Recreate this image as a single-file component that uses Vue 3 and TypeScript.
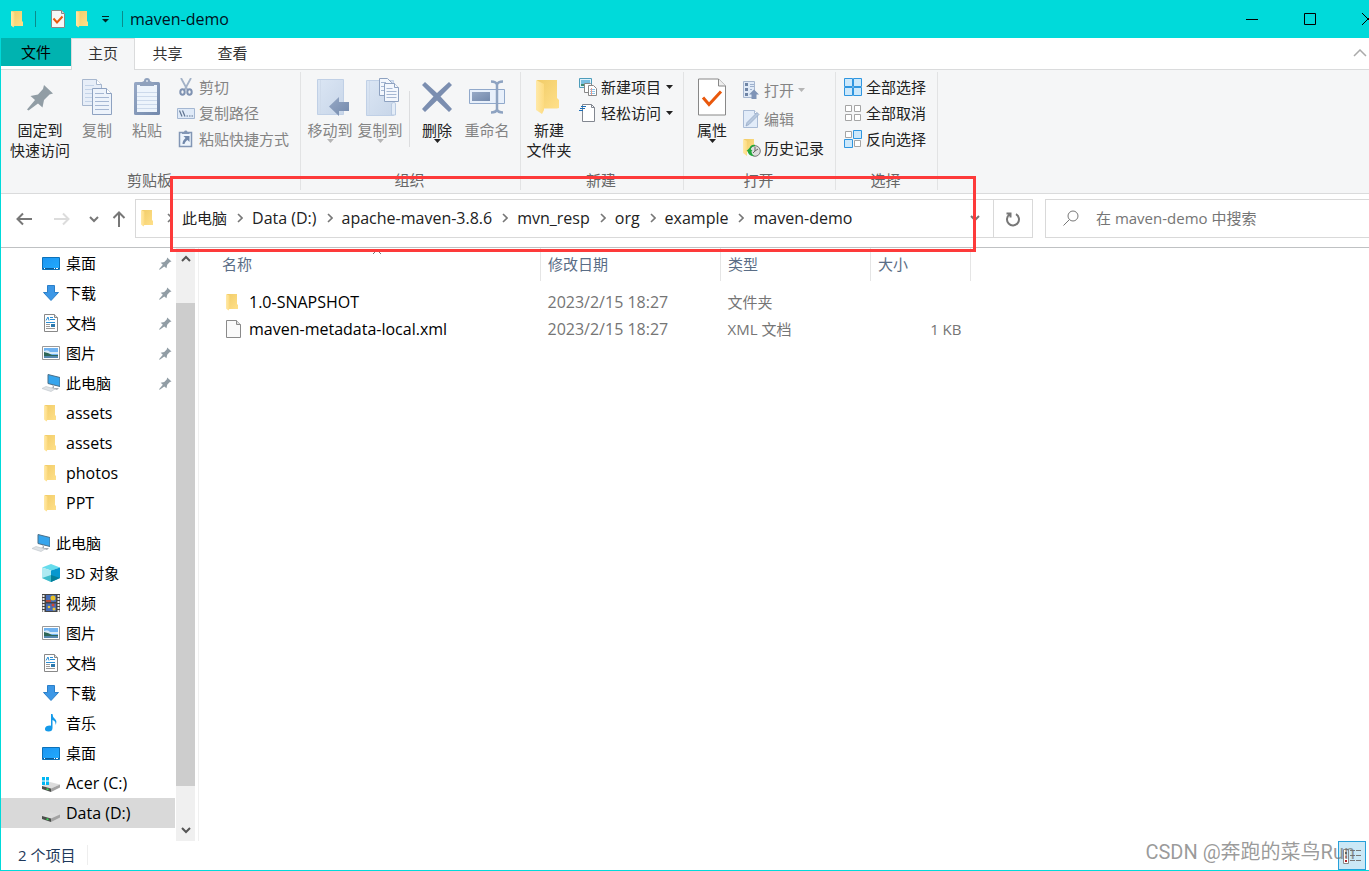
<script setup lang="ts">
import { ref } from 'vue'

interface TreeItem {
  label: string
  icon: string
  pinned?: boolean
  root?: boolean
  latin?: boolean
  selected?: boolean
}

interface FileRow {
  name: string
  icon: string
  modified: string
  type: string
  size: string
}

const tree: TreeItem[] = [
  { label: '桌面', icon: 'desktop', pinned: true },
  { label: '下载', icon: 'download', pinned: true },
  { label: '文档', icon: 'document', pinned: true },
  { label: '图片', icon: 'picture', pinned: true },
  { label: '此电脑', icon: 'computer', pinned: true },
  { label: 'assets', icon: 'folder', latin: true },
  { label: 'assets', icon: 'folder', latin: true },
  { label: 'photos', icon: 'folder', latin: true },
  { label: 'PPT', icon: 'folder', latin: true },
  { label: '此电脑', icon: 'computer', root: true },
  { label: '3D 对象', icon: 'cube' },
  { label: '视频', icon: 'video' },
  { label: '图片', icon: 'picture' },
  { label: '文档', icon: 'document' },
  { label: '下载', icon: 'download' },
  { label: '音乐', icon: 'music' },
  { label: '桌面', icon: 'desktop' },
  { label: 'Acer (C:)', icon: 'windrive', latin: true },
  { label: 'Data (D:)', icon: 'drive', latin: true, selected: true },
]

const crumbs: string[] = ['此电脑', 'Data (D:)', 'apache-maven-3.8.6', 'mvn_resp', 'org', 'example', 'maven-demo']

const files: FileRow[] = [
  { name: '1.0-SNAPSHOT', icon: 'folder', modified: '2023/2/15 18:27', type: '文件夹', size: '' },
  { name: 'maven-metadata-local.xml', icon: 'file', modified: '2023/2/15 18:27', type: 'XML 文档', size: '1 KB' },
]

const query = ref('')
</script>

<template>
  <div class="window">
    <svg class="sprite" aria-hidden="true">
      <defs>
        <linearGradient id="g-folder" x1="0" x2="1" y1="0" y2="1">
          <stop offset="0" stop-color="#f1cc68" /><stop offset="1" stop-color="#ffe08a" />
        </linearGradient>
        <linearGradient id="g-flap" x1="0" x2="1" y1="0" y2="0">
          <stop offset="0" stop-color="#ffe9a8" /><stop offset="1" stop-color="#fddb80" />
        </linearGradient>
        <linearGradient id="g-pale" x1="0" x2="1" y1="0" y2="1">
          <stop offset="0" stop-color="#dbe6f4" /><stop offset="1" stop-color="#c8d6e9" />
        </linearGradient>
        <linearGradient id="g-steel" x1="0" x2="1" y1="0" y2="1">
          <stop offset="0" stop-color="#97a9c6" /><stop offset="1" stop-color="#7389ac" />
        </linearGradient>
        <linearGradient id="g-blue" x1="0" x2="1" y1="0" y2="1">
          <stop offset="0" stop-color="#1b95f2" /><stop offset="1" stop-color="#22acff" />
        </linearGradient>
      </defs>
      <symbol id="i-folder" viewBox="0 0 18 18">
        <path d="M3 1h10v10l1 1v4H3z" fill="url(#g-folder)" />
        <path d="M2 1l3.500 1.600V15.500L4.500 17.500 2 15.500z" fill="url(#g-flap)" />
      </symbol>
      <symbol id="i-bigfolder" viewBox="0 0 26 36">
        <path d="M1 1h20v18l2 2v8h-2l2 .500H6z" fill="url(#g-folder)" />
        <path d="M0 1l8 4v26l-2 4-6-4z" fill="url(#g-flap)" />
      </symbol>
      <symbol id="i-pin" viewBox="0 0 27 27">
        <path d="M17 1l9 8.500-3.500 1L17 16l-1.500 7.500-4.500-4L1.500 26.500 0 25.500 8 16 3.500 12 11 10.500 16 5z" fill="#919da5" />
      </symbol>
      <symbol id="i-copy" viewBox="0 0 32 38">
        <g stroke="#a7b7ce">
          <path d="M1.500 1.500h14l5 5v21h-19z" fill="#e7eef8" /><path d="M15.500 1.500v5h5" fill="#fff" />
          <path d="M4 7.500h9M4 11.500h14M4 15.500h14M4 19.500h14M4 23.500h14" stroke="#c3d3e8" />
          <path d="M11.500 10.500h14l5 5v21h-19z" fill="#edf3fb" stroke="#8ea2c1" /><path d="M25.500 10.500v5h5" fill="#fff" stroke="#8ea2c1" />
          <path d="M14 15.500h9M14 19.500h14M14 23.500h14M14 27.500h14M14 31.500h14" stroke="#a5b7d3" />
        </g>
      </symbol>
      <symbol id="i-paste" viewBox="0 0 28 38">
        <rect x="1" y="4" width="26" height="33" rx="1.500" fill="url(#g-steel)" />
        <path d="M4 7h20v27H4z" fill="#edf4fc" />
        <path d="M4 14.500h20M4 18.500h20M4 22.500h20M4 26.500h20M4 30.500h20" stroke="#ccd9eb" />
        <path d="M7 8V5l4-2a3 3 0 0 1 6 0l4 2v3z" fill="#8fa1bd" /><circle cx="14" cy="3" r="1" fill="#dce5f0" />
      </symbol>
      <symbol id="i-cut" viewBox="0 0 18 18">
        <path d="M4 0l6.500 12M14 0L7.500 12" stroke="#a3b2c7" stroke-width="1.800" fill="none" />
        <g fill="none" stroke="#7f92b2" stroke-width="2"><ellipse cx="5.500" cy="14" rx="2.200" ry="2.800" /><ellipse cx="12.500" cy="14" rx="2.200" ry="2.800" /></g>
      </symbol>
      <symbol id="i-path" viewBox="0 0 18 18">
        <path d="M.5 4.500h17v10H.5z" fill="#dfeaf8" stroke="#a4b7d2" />
        <path d="M2.500 6.500l2.500 6M5.500 6.500l2.500 6M9.500 12h1.500M12 12h1.500M14.500 12h1.500" stroke="#5f7491" stroke-width="1.200" />
      </symbol>
      <symbol id="i-shortcut" viewBox="0 0 18 18">
        <path d="M2.500 2.500h12v14h-12z" fill="#edf4fc" stroke="#8296b5" stroke-width="1.500" />
        <path d="M5 4V2h2a1.800 1.800 0 0 1 3.500 0h2v2z" fill="#8296b5" />
        <path d="M6.500 6h6v6l-2-2c-1.500 1-2.500 2-3 4h-2c0-2.500 1-4 3-6z" fill="#7188ab" />
      </symbol>
      <symbol id="i-move" viewBox="0 0 34 38">
        <path d="M1.500 1.500h26v35h-26z" fill="url(#g-pale)" stroke="#c0d0e6" /><path d="M4.500 2v34" stroke="#cfdbeb" />
        <path d="M13 28.500L23 19v5h10v9H23v5z" fill="url(#g-steel)" />
      </symbol>
      <symbol id="i-copyto" viewBox="0 0 34 38">
        <path d="M.5 2.500h27v35H.5z" fill="url(#g-pale)" stroke="#c0d0e6" /><path d="M3.500 3v34" stroke="#cfdbeb" /><path d="M25.500 37V26q3-4 4 0v11z" fill="#e3ecf7" stroke="#b9cae1" />
        <g fill="#f3f7fd" stroke="#8ea2c1"><path d="M13.500.5h8l4 4v13h-12z" /><path d="M18.500 5.500h10l4 4v14h-14z" /><path d="M28.500 5.500v4h4" /><path d="M15 4.500h5M15 8.500h3M15 12.500h3M20.500 10.500h6M20.500 13.500h10M20.500 16.500h10M20.500 19.500h10" stroke="#a5b7d3" /></g>
      </symbol>
      <symbol id="i-delete" viewBox="0 0 32 32">
        <path d="M1 4l3-3 12 11L28 1l3 3-11.500 11.500L31 28l-3 3-12-11.500L4 31l-3-3 11.500-12.500z" fill="#7b8eb0" />
      </symbol>
      <symbol id="i-rename" viewBox="0 0 36 34">
        <path d="M.5 9.500h35v14H.5z" fill="#e8f0fb" stroke="#91a9cb" /><path d="M3 12h18v9H3z" fill="url(#g-steel)" />
        <path d="M22 1.500q5 0 6 3 1-3 6-3M28 4v26M22 32.500q5 0 6-3 1 3 6 3" fill="none" stroke="#8ea3c1" stroke-width="2.500" />
      </symbol>
      <symbol id="i-newitem" viewBox="0 0 18 18">
        <path d="M.5.5h12v9H.5z" fill="#dff1fb" stroke="#4e9dbb" /><path d="M2 2h9v4H2z" fill="#79bfe2" /><path d="M2 6h4v2H2z" fill="#3f8d72" />
        <path d="M5.500 5.500h6l2 2v7h-8z" fill="#fff" stroke="#888" />
        <path d="M9.500 7.500h5l3 3v7h-8z" fill="#fff" stroke="#888" /><path d="M11 11.500h5M11 13.500h5M11 15.500h5" stroke="#8fc5e7" /><path d="M12.500 10v7" stroke="#e79d91" />
      </symbol>
      <symbol id="i-easy" viewBox="0 0 18 18">
        <path d="M3.500.5h9l3 3v14h-12z" fill="#fff" stroke="#828790" /><path d="M12.500.5v3h3" fill="none" stroke="#828790" />
        <path d="M2 2.500h5M1 4.500h5M0 6.500h4" stroke="#1c6fb8" />
      </symbol>
      <symbol id="i-props" viewBox="0 0 28 37">
        <path d="M.5.500h20l7 7v29H.5z" fill="#fff" stroke="#888" /><path d="M20.500.5v7h7" fill="#eee" stroke="#888" />
        <path d="M5 19l6 7 12-13" fill="none" stroke="#e9580c" stroke-width="3" />
      </symbol>
      <symbol id="i-check" viewBox="0 0 14 18">
        <path d="M.5.500h10l3 3v14H.5z" fill="#f7f7f7" stroke="#888" /><path d="M10.500.5v3h3" fill="#ddd" stroke="#888" />
        <path d="M2.500 8.500l3.500 4 5.500-6" fill="none" stroke="#e9580c" stroke-width="2" />
      </symbol>
      <symbol id="i-open" viewBox="0 0 18 18">
        <path d="M.5.500h11v16H.5z" fill="#e0eaf7" stroke="#a6b6cf" /><path d="M2 2h3v3H2zM2 7h3v3H2zM2 12h3v3H2z" fill="#6f85a6" /><path d="M7 3.500h4M7 5.500h4M7 8.500h2" stroke="#9db0cd" />
        <path d="M11 8.500l5 5h-2.500V18h-5v-4.500H6z" fill="#7f94b7" />
      </symbol>
      <symbol id="i-edit" viewBox="0 0 18 18">
        <path d="M.5.5h11l3 3v14H.5z" fill="#e2ecf9" stroke="#a9bbd5" /><path d="M11.500.5v3h3" fill="#fff" stroke="#a9bbd5" />
        <path d="M3 16l1-3.500L14 2.500l2 2L6 14.500z" fill="#b7c8de" stroke="#91a5c3" stroke-width=".7" />
      </symbol>
      <symbol id="i-history" viewBox="0 0 18 18">
        <path d="M1 0h10v13H1z" fill="url(#g-folder)" /><path d="M0 0l4 2v15l-4-3z" fill="url(#g-flap)" />
        <circle cx="12" cy="12" r="5.300" fill="#ddd" stroke="#777" /><path d="M12 8v4l3-2M12 12l-2 2" stroke="#666" fill="none" />
        <path d="M3.500 12l3-3 3 3h-1q0 3.500 3 5-6 .5-7-5z" fill="#22a63b" /><path d="M7 10q1-4 5-3.500" stroke="#22a63b" stroke-width="1.500" fill="none" />
      </symbol>
      <symbol id="i-all" viewBox="0 0 18 18">
        <g fill="#cce8fb" stroke="#2f96e0"><path d="M.5.500h8v8h-8zM9.500.5h8v8h-8zM.5 9.500h8v8h-8zM9.500 9.500h8v8h-8z" /></g>
      </symbol>
      <symbol id="i-none" viewBox="0 0 18 18">
        <g fill="#fff" stroke="#a5a5a5"><path d="M1.500 1.500h6v6h-6zM10.500 1.500h6v6h-6zM1.500 10.500h6v6h-6zM10.500 10.500h6v6h-6z" /></g>
      </symbol>
      <symbol id="i-invert" viewBox="0 0 18 18">
        <g fill="#fff" stroke="#a5a5a5"><path d="M1.500 1.500h6v6h-6zM10.500 10.500h6v6h-6z" /></g>
        <g fill="#cce8fb" stroke="#2f96e0"><path d="M9.500.5h8v8h-8zM.5 9.500h8v8h-8z" /></g>
      </symbol>
      <symbol id="i-desktop" viewBox="0 0 18 18">
        <path d="M.5 3.500h17v12H.5z" fill="url(#g-blue)" stroke="#0c71b8" /><path d="M1 14h16v1H1z" fill="#0a5c99" /><path d="M2 14.500h1M12 14.500h1M14 14.500h2" stroke="#fff" />
      </symbol>
      <symbol id="i-download" viewBox="0 0 18 18">
        <path d="M5.500 1.500h7v7h4L9 16.500 1.500 8.500h4z" fill="#3c97e6" stroke="#2b7fc9" />
      </symbol>
      <symbol id="i-document" viewBox="0 0 18 18">
        <path d="M2.500.5h10l3 3v14h-13z" fill="#fff" stroke="#888" /><path d="M12.500.5v3h3" fill="#ddd" stroke="#888" />
        <path d="M4 6.500l2-3.500 1 3.500M8 3.500h3M8 5.500h5M4 8.500h9" stroke="#2a8fd6" fill="none" /><path d="M4 10.500h4M4 12.500h4M4 14.500h9" stroke="#999" /><path d="M9 10h4v3H9z" fill="#2b78ad" />
      </symbol>
      <symbol id="i-picture" viewBox="0 0 18 18">
        <path d="M.5 2.500h17v13H.5z" fill="#fff" stroke="#999" /><path d="M2 4h14v10H2z" fill="#6fb2f0" /><path d="M2 7q4-2 6 1h8v2H2z" fill="#d5e9f7" /><path d="M2 8q5 1 8 3h6v1H2z" fill="#2f6857" /><path d="M2 12h14v2H2z" fill="#5487ae" />
      </symbol>
      <symbol id="i-computer" viewBox="0 0 18 18">
        <path d="M6 .5l12 3v9L6 9.500z" fill="#35a5ed" stroke="#4a6f88" /><path d="M10 11l2 1v2l5 0-2 2-6-2 2-1z" fill="#a4adb3" />
        <path d="M0 14.500l4-2 9 2.500-4 2.500z" fill="#dfe3e6" stroke="#bdc4c9" stroke-width=".6" />
      </symbol>
      <symbol id="i-cube" viewBox="0 0 18 18">
        <path d="M0 3.500L9 0l9 3.500-9 3z" fill="#67dcec" /><path d="M0 3.500l9 3V18l-9-4z" fill="#aeeaf2" /><path d="M18 3.500l-9 3V18l9-4z" fill="#0798cf" /><path d="M0 14l9-3v7z" fill="#3fbccb" /><path d="M18 14l-9-3v7z" fill="#047f99" />
      </symbol>
      <symbol id="i-video" viewBox="0 0 18 18">
        <path d="M0 0h18v18H0z" fill="#444" /><path d="M1.500 1v17M16.500 1v17" stroke="#eee" stroke-width="2" stroke-dasharray="2 1" />
        <path d="M4 1h10v7H4zM4 9.500h10V17H4z" fill="#466cb6" /><circle cx="11" cy="4" r="2.500" fill="#e7bf25" /><path d="M4 6h5v2H4z" fill="#b44b39" /><circle cx="11" cy="11" r="1.500" fill="#d44932" /><circle cx="7" cy="13" r="1.300" fill="#ebc63a" /><circle cx="12" cy="15" r="1.500" fill="#ebc63a" />
      </symbol>
      <symbol id="i-music" viewBox="0 0 18 18">
        <path d="M9 0h1.500q0 3 2.500 5t.5 6q.5-4-3-5v8q0 3.500-4 3.500T3 14.500t5-3l1 .3z" fill="#159ae9" />
      </symbol>
      <symbol id="i-drive" viewBox="0 0 18 18">
        <path d="M0 12l8-4 10 2.500-9 4z" fill="#dcdcdc" /><path d="M0 12l9 2.500V18l-9-3z" fill="#4c4f4c" /><path d="M9 14.500l9-4v3L9 18z" fill="#a3a3a3" /><path d="M4.500 15l2 .5" stroke="#35dc52" stroke-width="1.300" />
      </symbol>
      <symbol id="i-windrive" viewBox="0 0 18 18">
        <path d="M0 12l8-4 10 2.500-9 4z" fill="#dcdcdc" /><path d="M0 12l9 2.500V18l-9-3z" fill="#4c4f4c" /><path d="M9 14.500l9-4v3L9 18z" fill="#a3a3a3" /><path d="M4.500 15l2 .5" stroke="#35dc52" stroke-width="1.300" />
        <path d="M0 3h3v3.500H0zM4 3h3v3.500H4zM0 7.500h3V11H0zM4 7.500h3V11H4z" fill="#00b7f4" />
      </symbol>
      <symbol id="i-file" viewBox="0 0 18 18">
        <path d="M2.500.5h10l4 4v13h-14z" fill="#fafafa" stroke="#8a8a8a" /><path d="M12.500.5v4h4" fill="#ddd" stroke="#8a8a8a" />
      </symbol>
      <symbol id="i-down" viewBox="0 0 7 4"><path d="M0 0h7L3.500 4z" fill="currentColor" /></symbol>
      <symbol id="i-right" viewBox="0 0 6 10"><path d="M1 1l4 4-4 4" fill="none" stroke="#777" stroke-width="1.600" /></symbol>
      <symbol id="i-chevron" viewBox="0 0 12 8"><path d="M2 2l4 4 4-4" fill="none" stroke="currentColor" stroke-width="2" /></symbol>
      <symbol id="i-back" viewBox="0 0 16 14"><path d="M7 1.500L1.500 7 7 12.500M1.500 7H16" fill="none" stroke="currentColor" stroke-width="2" /></symbol>
    </svg>

    <header class="titlebar">
      <svg class="i18"><use href="#i-folder" /></svg>
      <span class="mark mark-a"></span>
      <button class="quick" aria-label="属性"><svg class="check"><use href="#i-check" /></svg></button>
      <button class="quick" aria-label="新建文件夹"><svg class="i18"><use href="#i-folder" /></svg></button>
      <button class="quick more" aria-label="自定义快速访问工具栏">
        <svg viewBox="0 0 8 8"><path d="M1 1.500h7" stroke="#022" /><path d="M1 4h7L4.500 7.500z" fill="#022" /></svg>
      </button>
      <span class="mark"></span>
      <h1 class="latin">maven-demo</h1>
      <div class="controls">
        <button aria-label="最小化"><svg viewBox="0 0 12 12"><path d="M0 6.500h12" /></svg></button>
        <button aria-label="最大化"><svg viewBox="0 0 12 12"><path d="M.5.500h11v11H.5z" /></svg></button>
        <button aria-label="关闭"><svg viewBox="0 0 12 12"><path d="M0 0l12 12M12 0L0 12" /></svg></button>
      </div>
    </header>

    <nav class="tabs">
      <button class="file">文件</button>
      <button class="active">主页</button>
      <button>共享</button>
      <button>查看</button>
      <button class="collapse" aria-label="折叠功能区"><svg viewBox="0 0 14 8"><path d="M1 7l6-6 6 6" fill="none" stroke="#aaa" stroke-width="1.500" /></svg></button>
    </nav>

    <section class="ribbon">
      <div class="group clipboard">
        <div class="tools">
          <button class="big wide"><span class="art"><svg class="i27"><use href="#i-pin" /></svg></span><span>固定到</span><span>快速访问</span></button>
          <button class="big off"><span class="art"><svg class="w32"><use href="#i-copy" /></svg></span><span>复制</span></button>
          <button class="big off"><span class="art"><svg class="w28"><use href="#i-paste" /></svg></span><span>粘贴</span></button>
          <div class="stack">
            <button class="small off"><svg class="i18"><use href="#i-cut" /></svg>剪切</button>
            <button class="small off"><svg class="i18"><use href="#i-path" /></svg>复制路径</button>
            <button class="small off"><svg class="i18"><use href="#i-shortcut" /></svg>粘贴快捷方式</button>
          </div>
        </div>
        <div class="caption">剪贴板</div>
      </div>
      <div class="group organize">
        <div class="tools">
          <button class="big off"><span class="art shifted"><svg class="w34"><use href="#i-move" /></svg></span><span>移动到</span><svg class="down"><use href="#i-down" /></svg></button>
          <button class="big off"><span class="art shifted"><svg class="w34"><use href="#i-copyto" /></svg></span><span>复制到</span><svg class="down"><use href="#i-down" /></svg></button>
          <span class="rule"></span>
          <button class="big"><span class="art"><svg class="w32"><use href="#i-delete" /></svg></span><span>删除</span><svg class="down"><use href="#i-down" /></svg></button>
          <button class="big off"><span class="art"><svg class="w36"><use href="#i-rename" /></svg></span><span>重命名</span></button>
        </div>
        <div class="caption">组织</div>
      </div>
      <div class="group create">
        <div class="tools">
          <button class="big"><span class="art"><svg class="w26"><use href="#i-bigfolder" /></svg></span><span>新建</span><span>文件夹</span></button>
          <div class="stack roomy">
            <button class="small"><svg class="i18"><use href="#i-newitem" /></svg>新建项目<svg class="down"><use href="#i-down" /></svg></button>
            <button class="small"><svg class="i18"><use href="#i-easy" /></svg>轻松访问<svg class="down"><use href="#i-down" /></svg></button>
          </div>
        </div>
        <div class="caption">新建</div>
      </div>
      <div class="group open">
        <div class="tools">
          <button class="big"><span class="art"><svg class="w28"><use href="#i-props" /></svg></span><span>属性</span><svg class="down"><use href="#i-down" /></svg></button>
          <div class="stack tall">
            <button class="small off"><svg class="i18"><use href="#i-open" /></svg>打开<svg class="down"><use href="#i-down" /></svg></button>
            <button class="small off"><svg class="i18"><use href="#i-edit" /></svg>编辑</button>
            <button class="small"><svg class="i18"><use href="#i-history" /></svg>历史记录</button>
          </div>
        </div>
        <div class="caption">打开</div>
      </div>
      <div class="group select">
        <div class="tools">
          <div class="stack roomy">
            <button class="small"><svg class="i18"><use href="#i-all" /></svg>全部选择</button>
            <button class="small"><svg class="i18"><use href="#i-none" /></svg>全部取消</button>
            <button class="small"><svg class="i18"><use href="#i-invert" /></svg>反向选择</button>
          </div>
        </div>
        <div class="caption">选择</div>
      </div>
    </section>

    <section class="navrow">
      <div class="history">
        <button aria-label="后退"><svg class="arrow"><use href="#i-back" /></svg></button>
        <button class="dim" aria-label="前进"><svg class="arrow flip"><use href="#i-back" /></svg></button>
        <button class="narrow" aria-label="最近位置"><svg class="chev"><use href="#i-chevron" /></svg></button>
        <button class="narrow" aria-label="向上"><svg class="arrow up"><use href="#i-back" /></svg></button>
      </div>
      <div class="address">
        <svg class="i18"><use href="#i-folder" /></svg>
        <template v-for="crumb in crumbs" :key="crumb">
          <svg class="sep"><use href="#i-right" /></svg>
          <a href="#" :class="{ latin: crumb !== '此电脑' }">{{ crumb }}</a>
        </template>
        <button class="drop" aria-label="以前的位置"><svg class="chev"><use href="#i-chevron" /></svg></button>
        <button class="refresh" aria-label="刷新">
          <svg viewBox="0 0 16 16"><path d="M11 3.200A6 6 0 1 1 4.500 3.500M1.500 2.500h4v4" fill="none" stroke="#777" stroke-width="2" /></svg>
        </button>
      </div>
      <label class="search">
        <svg viewBox="0 0 16 16"><circle cx="10" cy="6" r="5" fill="none" stroke="#777" /><path d="M6.500 9.500L.5 15.500" stroke="#777" /></svg>
        <input v-model="query" type="text" placeholder="在 maven-demo 中搜索" aria-label="搜索" />
      </label>
      <div class="highlight"></div>
    </section>

    <main class="body">
      <nav class="tree">
        <a
          v-for="(item, i) in tree"
          :key="i"
          href="#"
          :class="{ root: item.root, selected: item.selected, latin: item.latin }"
        >
          <svg class="i18"><use :href="'#i-' + item.icon" /></svg>
          <span>{{ item.label }}</span>
          <svg v-if="item.pinned" class="pin"><use href="#i-pin" /></svg>
        </a>
      </nav>
      <div class="scroll">
        <svg class="chev flipped"><use href="#i-chevron" /></svg>
        <div class="thumb"></div>
        <svg class="chev"><use href="#i-chevron" /></svg>
      </div>
      <div class="list">
        <svg class="sort" viewBox="0 0 10 6"><path d="M1 5l4-4 4 4" fill="none" stroke="#777" /></svg>
        <table>
          <colgroup><col class="c-name" /><col class="c-date" /><col class="c-type" /><col class="c-size" /></colgroup>
          <thead>
            <tr><th>名称</th><th>修改日期</th><th>类型</th><th>大小</th></tr>
          </thead>
          <tbody>
            <tr v-for="file in files" :key="file.name">
              <td class="latin"><span class="name"><svg class="i18"><use :href="'#i-' + file.icon" /></svg>{{ file.name }}</span></td>
              <td class="latin">{{ file.modified }}</td>
              <td>{{ file.type }}</td>
              <td class="size">{{ file.size }}</td>
            </tr>
          </tbody>
        </table>
      </div>
    </main>

    <footer class="status">
      <span class="count">2 个项目</span>
      <button class="view" aria-label="详细信息">
        <svg viewBox="0 0 18 18"><path d="M.5 2.500h5v14h-5z" fill="#fff" stroke="#888" /><path d="M2 5h2v2H2z" fill="#555" /><path d="M2 9h2v2H2z" fill="#d88" /><path d="M2 13h2v2H2z" fill="#b31f24" /><path d="M7 3.500h5M13 3.500h5M7 8.500h5M13 8.500h5M7 13.500h5M13 13.500h5" stroke="#777" /></svg>
      </button>
      <div class="watermark">CSDN @奔跑的菜鸟Run</div>
    </footer>
  </div>
</template>

<style>
body {
  margin: 0;
}
</style>

<style scoped>
.window {
  display: flex;
  flex-direction: column;
  box-sizing: border-box;
  min-height: 100vh;
  overflow: hidden;
  border-left: 1px solid #00dada;
  border-bottom: 1px solid #00dada;
  background: #fff;
  color: #222;
  font-family: "Open Sans", "Noto Sans", "Noto Sans CJK SC", sans-serif;
  font-size: 15px;
  line-height: 20px;
}
.window * {
  box-sizing: border-box;
}
.latin {
  font-size: 16px;
}
.sprite {
  position: absolute;
  width: 0;
  height: 0;
}
svg {
  display: block;
  flex: none;
}
button {
  display: flex;
  align-items: center;
  justify-content: center;
  padding: 0;
  border: 0;
  background: none;
  color: inherit;
  font: inherit;
  white-space: nowrap;
}
a {
  color: inherit;
  text-decoration: none;
}
.i18 { width: 18px; height: 18px; }
.i27 { width: 27px; height: 27px; }
.w26 { width: 26px; height: 36px; }
.w28 { width: 28px; height: 38px; }
.w32 { width: 32px; height: 38px; }
.w34 { width: 34px; height: 38px; }
.w36 { width: 36px; height: 34px; }
.down { width: 7px; height: 4px; }
.chev { width: 12px; height: 8px; }

.titlebar {
  display: flex;
  align-items: center;
  height: 38px;
  padding-left: 8px;
  background: #00dada;
  color: #012;
}
.mark {
  width: 1px;
  height: 16px;
  background: #0a8c8c;
}
.mark-a {
  margin: 0 7px 0 8px;
}
.quick {
  width: 25px;
  height: 24px;
}
.quick.more {
  width: 20px;
  margin-right: 7px;
}
.quick.more svg {
  width: 8px;
  height: 8px;
}
.mark-a + .quick {
  margin-left: 2px;
}
.check {
  width: 14px;
  height: 18px;
}
h1 {
  flex: 1;
  margin: 0 0 0 7px;
  font-weight: 400;
}
.controls {
  display: flex;
  margin-right: -28px;
}
.controls button {
  width: 58px;
  height: 38px;
}
.controls svg {
  width: 12px;
  height: 12px;
  fill: none;
  stroke: #000;
}

.tabs {
  display: flex;
  height: 32px;
  border-bottom: 1px solid #dadbdc;
  color: #333;
}
.tabs button {
  width: 65px;
  height: 30px;
}
.tabs .file {
  width: 70px;
  height: 28px;
  background: #00b3b0;
  color: #000;
}
.tabs .active {
  width: 64px;
  height: 32px;
  padding-bottom: 3px;
  border: 1px solid #dadbdc;
  border-width: 1px 1px 0;
  background: #f5f6f7;
}
.tabs .collapse {
  width: 18px;
  margin-left: auto;
}
.collapse svg {
  width: 14px;
  height: 8px;
}

.ribbon {
  display: flex;
  height: 124px;
  padding: 2px 0 3px;
  border-bottom: 1px solid #dadbdc;
  background: #f5f6f7;
}
.group {
  display: flex;
  flex-direction: column;
  flex: none;
  border-right: 1px solid #e2e3e4;
}
.clipboard { width: 300px; }
.organize { width: 220px; }
.create { width: 163px; }
.open { width: 152px; }
.select { width: 102px; }
.tools {
  display: flex;
  flex: 1;
  padding-left: 3px;
}
.clipboard .tools {
  padding-left: 7px;
}
.organize .tools {
  padding-left: 4px;
}
.caption {
  padding-right: 2px;
  color: #666;
  text-align: center;
}
.big {
  flex-direction: column;
  justify-content: flex-start;
  width: 50px;
  padding-top: 5px;
}
.big.wide {
  width: 64px;
}
.big .down {
  margin-top: -1px;
}
.art {
  display: flex;
  align-items: center;
  height: 40px;
  margin-bottom: 3px;
}
.shifted {
  padding-left: 6px;
}
.off {
  color: #848484;
}
.off .down {
  color: #b5b5b5;
}
.stack {
  display: flex;
  flex-direction: column;
  align-items: flex-start;
  padding: 2px 0 0 5px;
}
.small {
  gap: 3px;
  height: 26px;
}
.roomy .small,
.clipboard .small {
  gap: 4px;
}
.tall {
  padding: 3px 0 0 6px;
}
.tall .small {
  height: 29px;
}
.small .down {
  margin-left: 1px;
}
.rule {
  width: 1px;
  height: 56px;
  margin: 19px 2px 0 4px;
  background: #dcdddf;
}

.navrow {
  position: relative;
  display: flex;
  align-items: center;
  height: 54px;
  padding-bottom: 4px;
  border-bottom: 1px solid #bfc1c3;
}
.history {
  display: flex;
  width: 134px;
  padding-left: 4px;
  color: #777;
}
.history button {
  width: 38px;
  height: 38px;
}
.history .narrow {
  width: 25px;
}
.history .dim {
  color: #dcdcdc;
}
.arrow {
  width: 16px;
  height: 14px;
}
.flip {
  transform: scaleX(-1);
}
.up {
  transform: rotate(90deg);
}
.address {
  display: flex;
  align-items: center;
  flex: 1;
  height: 39px;
  padding: 0 0 2px 3px;
  border: 1px solid #d9d9d9;
}
.sep {
  width: 6px;
  height: 10px;
  margin: 0 9px 0 10px;
}
.drop {
  width: 36px;
  height: 37px;
  margin-left: auto;
  color: #777;
}
.refresh {
  width: 39px;
  height: 37px;
  margin-bottom: -2px;
  border-left: 1px solid #d9d9d9;
}
.refresh svg {
  width: 16px;
  height: 16px;
}
.search {
  display: flex;
  align-items: center;
  width: 324px;
  height: 39px;
  margin-left: 12px;
  padding: 0 0 2px 17px;
  border: 1px solid #d9d9d9;
  border-right: 0;
}
.search svg {
  width: 16px;
  height: 16px;
  margin-right: 17px;
}
.search input {
  flex: 1;
  min-width: 0;
  padding: 0;
  border: 0;
  outline: 0;
  background: none;
  color: #333;
  font: inherit;
}
.search input::placeholder {
  color: #757575;
  opacity: 1;
}
.highlight {
  position: absolute;
  z-index: 2;
  top: -18px;
  right: 393px;
  bottom: -5px;
  left: 169px;
  border: 3px solid #fd3a3a;
  pointer-events: none;
}

.body {
  display: flex;
  flex: 1;
}
.tree {
  width: 175px;
  padding-bottom: 13px;
  color: #000;
}
.tree a {
  display: flex;
  align-items: center;
  gap: 6px;
  height: 30px;
  padding-left: 41px;
}
.tree .root {
  margin-top: 10px;
  padding-left: 31px;
}
.tree .selected {
  width: 174px;
  background: #d9d9d9;
}
.pin {
  width: 13px;
  height: 13px;
  margin: 0 4px 0 auto;
}
.scroll {
  display: flex;
  flex-direction: column;
  align-items: center;
  width: 19px;
  padding: 7px 0;
  background: #f0f0f0;
  color: #555;
}
.flipped {
  transform: rotate(180deg);
}
.thumb {
  flex: 1;
  width: 19px;
  margin: 40px 0;
  background: #cdcdcd;
}
.list {
  position: relative;
  flex: 1;
  margin-left: 3px;
  border-left: 1px solid #f0f0f0;
}
.sort {
  position: absolute;
  top: 1px;
  left: 173px;
  width: 10px;
  height: 6px;
}
table {
  width: 772px;
  border-collapse: collapse;
  table-layout: fixed;
}
.c-date { width: 180px; }
.c-type { width: 150px; }
.c-size { width: 100px; }
th {
  height: 33px;
  padding: 0 0 2px 7px;
  border-right: 1px solid #e5e5e5;
  color: #5a6d86;
  font-weight: 400;
  text-align: left;
}
th:first-child {
  padding-left: 23px;
}
tbody::before {
  content: "";
  display: block;
  height: 7px;
}
td {
  height: 27px;
  padding: 0 0 0 7px;
  color: #757575;
}
td:first-child {
  padding-left: 25px;
  color: #000;
}
td.size {
  padding-right: 9px;
  text-align: right;
}
.name {
  display: flex;
  align-items: center;
  gap: 7px;
}

.status {
  position: relative;
  display: flex;
  align-items: center;
  justify-content: space-between;
  height: 29px;
  padding: 0 3px 0 17px;
  color: #1e395b;
}
.count {
  margin-bottom: 2px;
  padding-right: 12px;
  border-right: 1px solid #eee;
}
.view {
  width: 28px;
  height: 29px;
  border: 1px solid #26a0da;
  background: #cbe8f6;
}
.view svg {
  width: 18px;
  height: 18px;
}
.watermark {
  position: absolute;
  right: 14px;
  bottom: 6px;
  color: rgba(110, 110, 110, 0.7);
  font-family: Roboto, "Noto Sans CJK SC", sans-serif;
  font-size: 20px;
  line-height: 24px;
  pointer-events: none;
}
</style>
